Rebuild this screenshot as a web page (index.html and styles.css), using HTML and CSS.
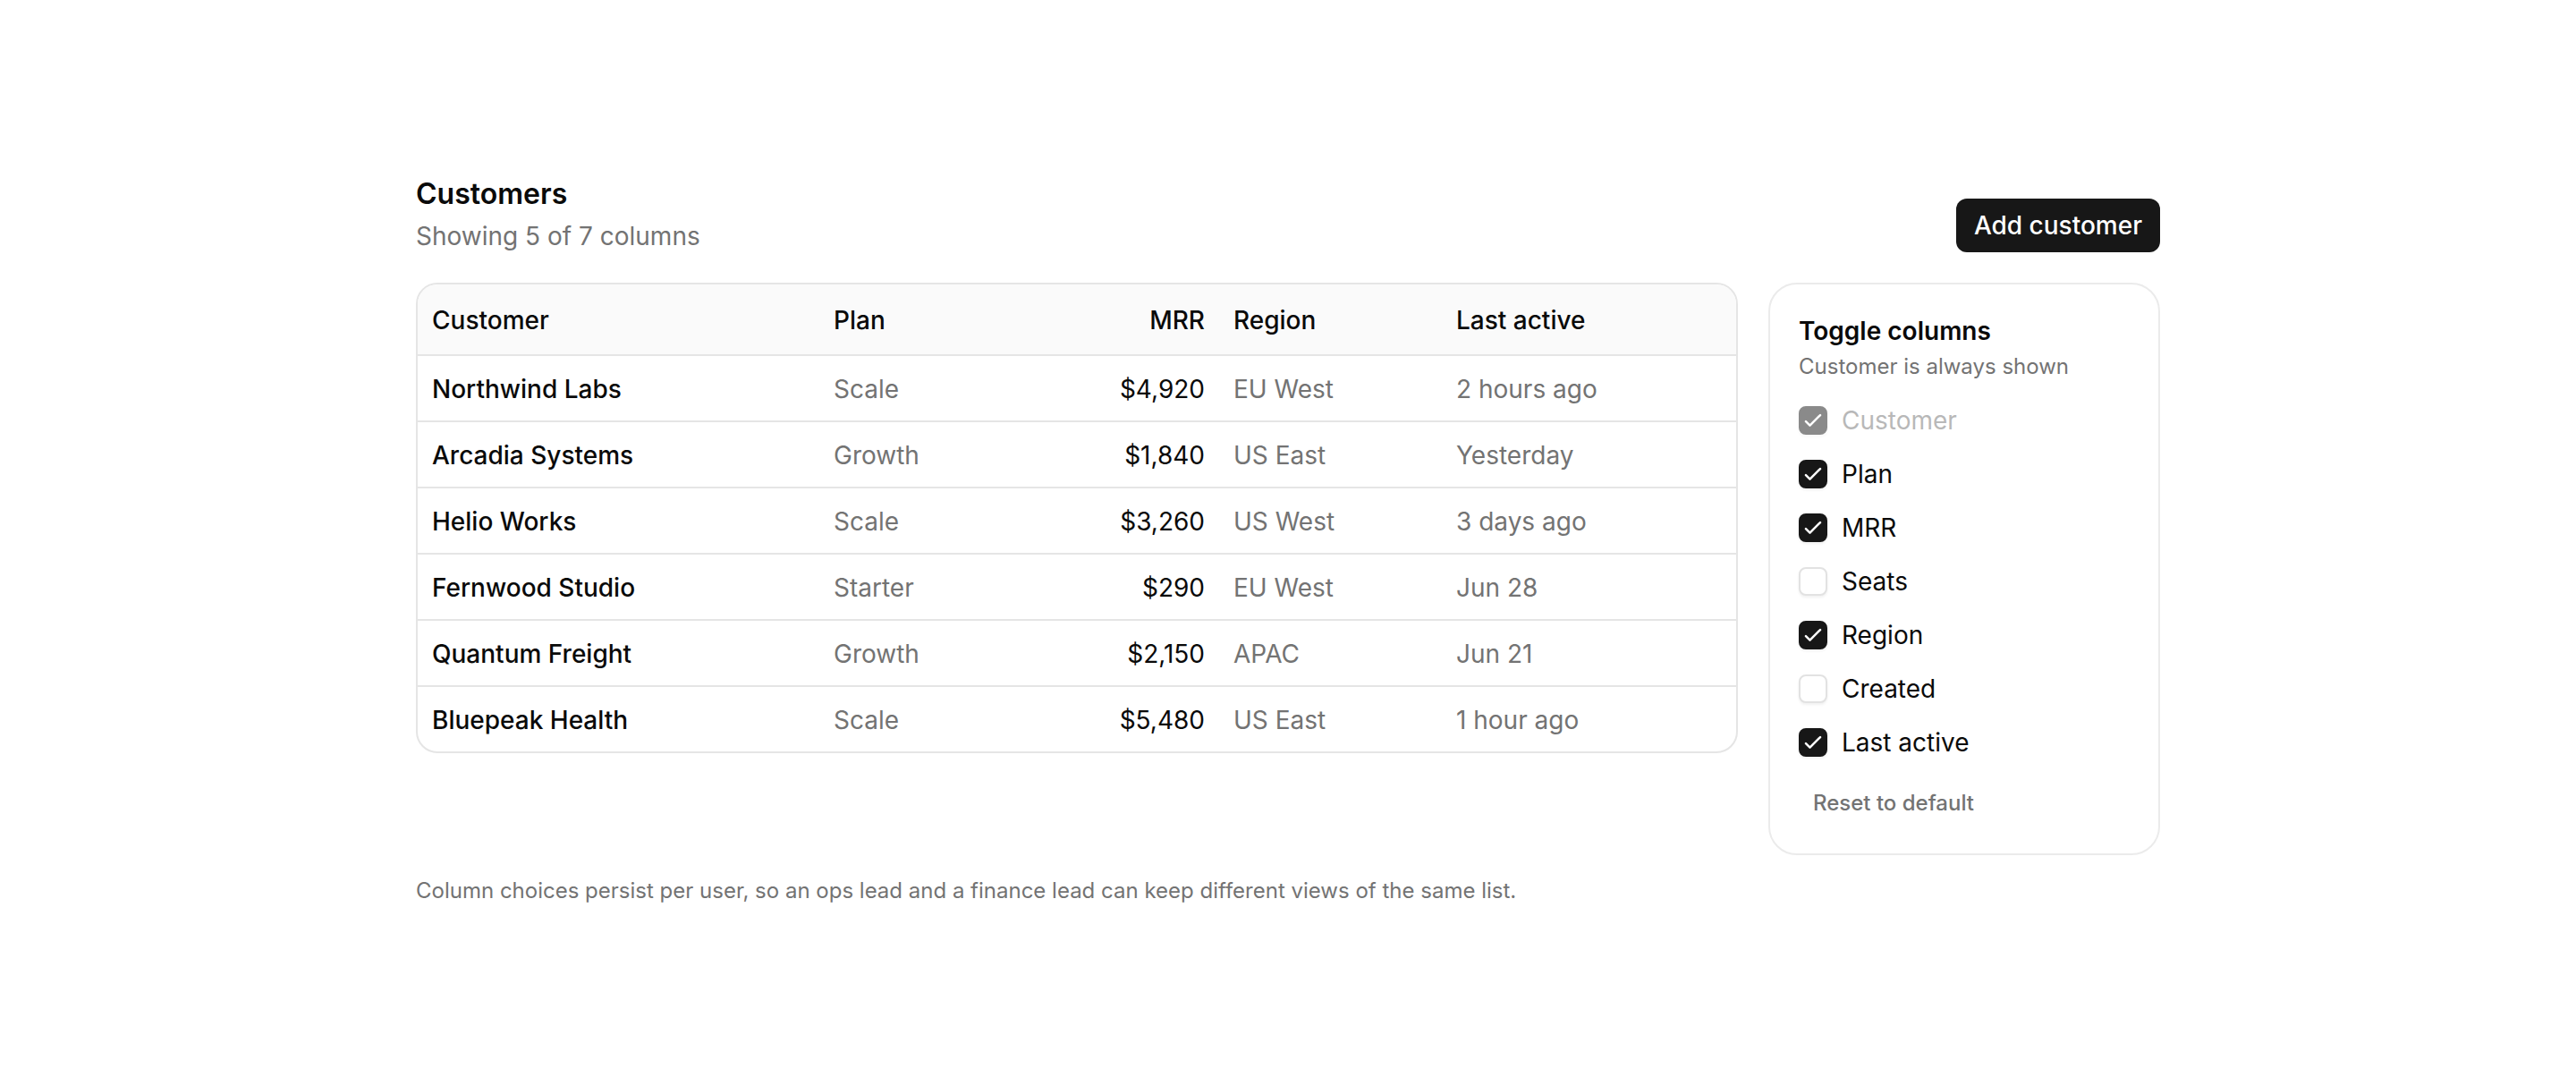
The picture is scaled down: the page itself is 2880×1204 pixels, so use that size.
FILE: index.html
```html
<!DOCTYPE html>
<html lang="en">
  <head>
    <meta charset="UTF-8" />
    <meta name="viewport" content="width=device-width, initial-scale=1.0" />
    <title>Customers</title>
    <link rel="stylesheet" href="styles.css">
  </head>

  <body>
    <main class="page">
      <div class="head">
        <div class="head-text">
          <h1>Customers</h1>
          <p class="sub">Showing 5 of 7 columns</p>
        </div>
        <button class="add">Add customer</button>
      </div>

      <div class="layout">
        <div class="table-card">
          <table>
            <colgroup>
              <col class="c-name" />
              <col class="c-plan" />
              <col class="c-mrr" />
              <col class="c-region" />
              <col class="c-active" />
            </colgroup>
            <thead>
              <tr>
                <th>Customer</th>
                <th>Plan</th>
                <th class="num">MRR</th>
                <th>Region</th>
                <th>Last active</th>
              </tr>
            </thead>
            <tbody>
              <tr>
                <td class="name">Northwind Labs</td>
                <td class="muted">Scale</td>
                <td class="num">$4,920</td>
                <td class="muted">EU West</td>
                <td class="muted">2 hours ago</td>
              </tr>
              <tr>
                <td class="name">Arcadia Systems</td>
                <td class="muted">Growth</td>
                <td class="num">$1,840</td>
                <td class="muted">US East</td>
                <td class="muted">Yesterday</td>
              </tr>
              <tr>
                <td class="name">Helio Works</td>
                <td class="muted">Scale</td>
                <td class="num">$3,260</td>
                <td class="muted">US West</td>
                <td class="muted">3 days ago</td>
              </tr>
              <tr>
                <td class="name">Fernwood Studio</td>
                <td class="muted">Starter</td>
                <td class="num">$290</td>
                <td class="muted">EU West</td>
                <td class="muted">Jun 28</td>
              </tr>
              <tr>
                <td class="name">Quantum Freight</td>
                <td class="muted">Growth</td>
                <td class="num">$2,150</td>
                <td class="muted">APAC</td>
                <td class="muted">Jun 21</td>
              </tr>
              <tr>
                <td class="name">Bluepeak Health</td>
                <td class="muted">Scale</td>
                <td class="num">$5,480</td>
                <td class="muted">US East</td>
                <td class="muted">1 hour ago</td>
              </tr>
            </tbody>
          </table>
        </div>

        <aside class="panel">
          <h2>Toggle columns</h2>
          <p class="hint">Customer is always shown</p>
          <ul class="options">
            <li class="option disabled">
              <span class="box on"><svg viewBox="0 0 16 16"><path d="M3.4 8.6L6 11.2l6.6-6.6" /></svg></span>
              Customer
            </li>
            <li class="option">
              <span class="box on"><svg viewBox="0 0 16 16"><path d="M3.4 8.6L6 11.2l6.6-6.6" /></svg></span>
              Plan
            </li>
            <li class="option">
              <span class="box on"><svg viewBox="0 0 16 16"><path d="M3.4 8.6L6 11.2l6.6-6.6" /></svg></span>
              MRR
            </li>
            <li class="option">
              <span class="box"></span>
              Seats
            </li>
            <li class="option">
              <span class="box on"><svg viewBox="0 0 16 16"><path d="M3.4 8.6L6 11.2l6.6-6.6" /></svg></span>
              Region
            </li>
            <li class="option">
              <span class="box"></span>
              Created
            </li>
            <li class="option">
              <span class="box on"><svg viewBox="0 0 16 16"><path d="M3.4 8.6L6 11.2l6.6-6.6" /></svg></span>
              Last active
            </li>
          </ul>
          <button class="reset">Reset to default</button>
        </aside>
      </div>

      <p class="note">Column choices persist per user, so an ops lead and a finance lead can keep different views of the same list.</p>
    </main>
  </body>
</html>
```

FILE: styles.css
```css
body {
  margin: 0;
  background: #fff;
  color: #0a0a0a;
  font-family: Inter, "Noto Sans", sans-serif;
}

.page {
  width: 1950px;
  margin: 0 auto;
  padding-top: 192px;
}

.head {
  display: flex;
  justify-content: space-between;
  align-items: flex-end;
}

.head h1 {
  margin: 0;
  font-size: 32px;
  line-height: 50px;
  font-weight: 600;
}

.head .sub {
  margin: 2px 0 0;
  font-size: 28px;
  line-height: 40px;
  color: #737373;
}

.add {
  background: #171717;
  color: #fff;
  border: none;
  border-radius: 12px;
  padding: 10px 20px;
  font-family: inherit;
  font-size: 28px;
  line-height: 40px;
  font-weight: 500;
  cursor: pointer;
  margin-bottom: 2px;
}

.layout {
  display: flex;
  align-items: flex-start;
  gap: 34px;
  margin-top: 32px;
}

.table-card {
  flex: 1;
  border: 2px solid #e5e5e5;
  border-radius: 24px;
  overflow: hidden;
}

.table-card table {
  width: 100%;
  border-collapse: collapse;
  table-layout: fixed;
  font-size: 28px;
  line-height: 40px;
}

.c-name { width: 449px; }
.c-plan { width: 223px; }
.c-mrr { width: 224px; }
.c-region { width: 249px; }
.c-active { width: 329px; }

.table-card th {
  background: #fafafa;
  text-align: left;
  font-weight: 500;
  padding: 20px 16px 18px;
  border-bottom: 2px solid #e5e5e5;
}

.table-card td {
  padding: 17px 16px 15px;
  border-top: 2px solid #e5e5e5;
}

.table-card tbody tr:first-child td {
  border-top: none;
}

.table-card .name {
  font-weight: 500;
}

.table-card .muted {
  color: #737373;
}

.table-card .num {
  text-align: right;
}

.panel {
  width: 438px;
  box-sizing: border-box;
  border: 2px solid #ebebeb;
  border-radius: 32px;
  padding: 32px;
}

.panel h2 {
  margin: 0;
  font-size: 28px;
  line-height: 40px;
  font-weight: 600;
}

.panel .hint {
  margin: 4px 0 0;
  font-size: 24px;
  line-height: 32px;
  color: #737373;
}

.options {
  list-style: none;
  margin: 24px 0 0;
  padding: 0;
  display: flex;
  flex-direction: column;
  gap: 20px;
}

.option {
  display: flex;
  align-items: center;
  gap: 16px;
  font-size: 28px;
  line-height: 40px;
}

.option.disabled {
  opacity: 0.5;
  color: #737373;
}

.box {
  width: 32px;
  height: 32px;
  box-sizing: border-box;
  border-radius: 8px;
  border: 2px solid #e2e2e2;
  background: #fff;
  box-shadow: 0 2px 3px rgba(0, 0, 0, 0.06);
  display: flex;
}

.box.on {
  background: #171717;
  border-color: #171717;
}

.box svg {
  width: 100%;
  height: 100%;
  fill: none;
  stroke: #fff;
  stroke-width: 1.4;
  stroke-linecap: round;
  stroke-linejoin: round;
}

.reset {
  margin-top: 24px;
  background: none;
  border: none;
  padding: 8px 16px;
  font-family: inherit;
  font-size: 24px;
  line-height: 32px;
  font-weight: 500;
  color: #737373;
  cursor: pointer;
}

.note {
  margin: 24px 0 0;
  font-size: 24px;
  line-height: 32px;
  color: #737373;
}
```
